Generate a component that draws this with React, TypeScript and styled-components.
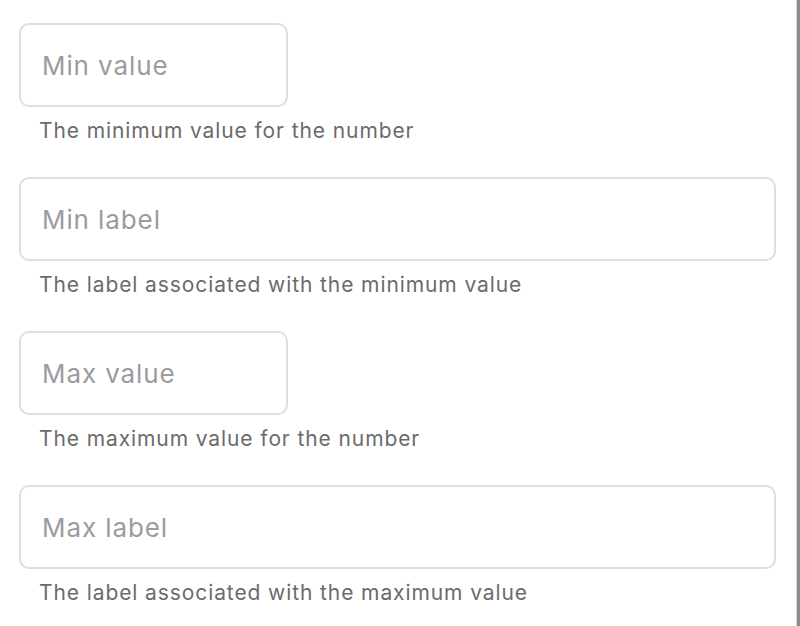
import React from 'react';
import styled, {createGlobalStyle} from "styled-components";

type FieldPropsType = {
    placeholder: string,
    hint: string,
    wide?: boolean
}

const fields: FieldPropsType[] = [
    {placeholder: 'Min value', hint: 'The minimum value for the number'},
    {placeholder: 'Min label', hint: 'The label associated with the minimum value', wide: true},
    {placeholder: 'Max value', hint: 'The maximum value for the number'},
    {placeholder: 'Max label', hint: 'The label associated with the maximum value', wide: true},
]

const Field = (props: FieldPropsType) => {
    return (
        <StyledField>
            <Input type="text" placeholder={props.placeholder} $wide={props.wide}/>
            <Hint>{props.hint}</Hint>
        </StyledField>
    );
};

export default function App() {
    return (
        <>
            <GlobalStyle/>
            <Page>
                <Form>
                    {fields.map(f => <Field key={f.placeholder} {...f}/>)}
                </Form>
            </Page>
        </>
    );
}

const GlobalStyle = createGlobalStyle`
  body {
    margin: 0;
    background: #fff;
    font-family: Inter, "Noto Sans", sans-serif;
  }
`

const Page = styled.div`
  width: 800px;
  height: 626px;
  box-sizing: border-box;
  border-right: 3px solid #8c8c8c;
  box-shadow: inset -1px 0 0 #d6d6d6;
  overflow: hidden;
`

const Form = styled.div`
  display: flex;
  flex-direction: column;
  row-gap: 34px;
  padding: 23px 21px 0 19px;
`

const StyledField = styled.div`
  display: flex;
  flex-direction: column;
  row-gap: 12px;
`

const Input = styled.input<{ $wide?: boolean }>`
  width: ${props => props.$wide ? '100%' : '269px'};
  height: 84px;
  box-sizing: border-box;
  border: 2px solid #dedede;
  border-radius: 10px;
  padding: 0 21px;
  font-family: Inter, "Noto Sans", sans-serif;
  font-size: 26px;
  letter-spacing: 0.9px;
  color: #333;
  outline: none;

  &::placeholder {
    color: #9b9ba1;
  }
`

const Hint = styled.p`
  margin: 0;
  padding-left: 20px;
  color: #6b6b6b;
  font-size: 21px;
  letter-spacing: 0.9px;
  line-height: 24px;
`
